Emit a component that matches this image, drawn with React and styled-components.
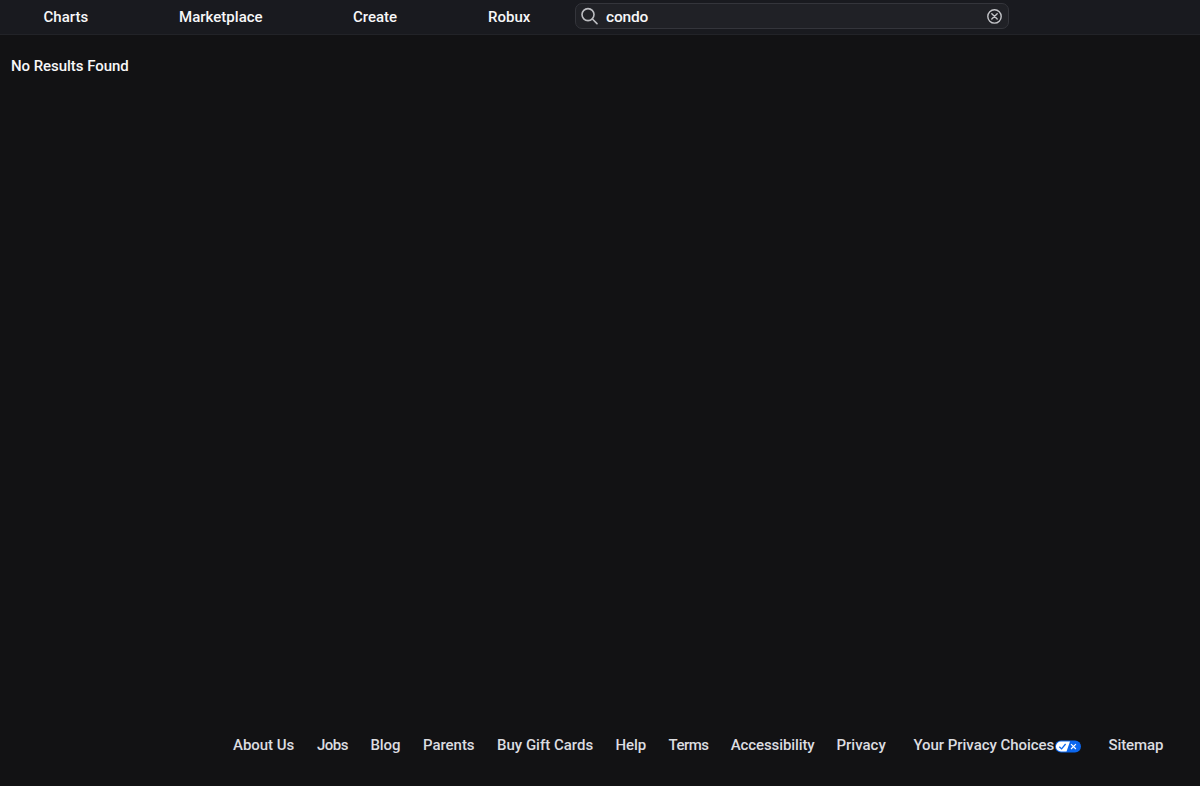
import React from "react";
import styled, { createGlobalStyle } from "styled-components";

const GlobalStyle = createGlobalStyle`
  * { box-sizing: border-box; }
  body {
    margin: 0;
    background: #121214;
    color: #f7f7f8;
    font-family: Roboto, "Liberation Sans", sans-serif;
    font-size: 15px;
    line-height: 20px;
  }
`;

const Page = styled.div`
  display: flex;
  flex-direction: column;
  height: 786px;
  overflow: hidden;
`;

const Header = styled.header`
  display: flex;
  flex: none;
  height: 35px;
  padding: 3px 0 0 43.5px;
  background: #191a1f;
  border-bottom: 1px solid #222328;
`;

const Nav = styled.nav`
  display: flex;
  gap: 91px;
  width: 531.5px;
  padding-top: 4px;
`;

const NavLink = styled.a`
  width: ${(p) => p.$width}px;
  font-weight: 550;
  letter-spacing: ${(p) => p.$track || 0}px;
  white-space: nowrap;
`;

const SearchBox = styled.div`
  display: flex;
  align-items: center;
  width: 434px;
  height: 26px;
  padding: 0 5px;
  background: #202126;
  border: 1px solid #34353b;
  border-radius: 7px;
`;

const Query = styled.span`
  flex: 1;
  padding: 1px 0 0 7px;
  font-size: 15.5px;
  font-weight: 500;
  letter-spacing: -0.2px;
`;

const Content = styled.main`
  flex: 1;
  padding: 21px 11px;
`;

const Message = styled.p`
  margin: 0;
  font-weight: 550;
  letter-spacing: -0.05px;
`;

const Footer = styled.footer`
  display: flex;
  flex: none;
  height: 51px;
  padding-left: 233px;
  color: #dcdde0;
`;

const FooterLink = styled.a`
  display: flex;
  flex: none;
  align-items: center;
  width: ${(p) => p.$width}px;
  height: 20px;
  font-weight: 500;
  letter-spacing: ${(p) => p.$track || 0}px;
  white-space: nowrap;
`;

const navItems = [
  ["Charts", 44.5, 0],
  ["Marketplace", 83, 0.02],
  ["Create", 44, 0],
  ["Robux", 43, 0],
];

const footerItems = [
  ["About Us", 84, -0.05],
  ["Jobs", 53.5, -0.5],
  ["Blog", 52.5, -0.1],
  ["Parents", 74, -0.05],
  ["Buy Gift Cards", 118.5, 0],
  ["Help", 53, -0.1],
  ["Terms", 62.2, -0.5],
  ["Accessibility", 105.8, -0.1],
  ["Privacy", 77, 0],
  ["Your Privacy Choices", 142, -0.05],
];

const SearchIcon = () => (
  <svg width="18" height="18" viewBox="0 0 18 18" fill="none" stroke="#bcbdc1" strokeWidth="1.6" strokeLinecap="round">
    <circle cx="7" cy="7.6" r="6" />
    <path d="m11.4 12 4.6 4.6" />
  </svg>
);

const ClearIcon = () => (
  <svg width="16" height="16" viewBox="1 0 16 16" fill="none" stroke="#c3c4c8" strokeWidth="1.4" strokeLinecap="round">
    <circle cx="8.5" cy="8.4" r="6.7" />
    <path d="m5.8 5.7 5.4 5.4m0-5.4-5.4 5.4" />
  </svg>
);

const ChoicesSlot = styled.span`
  display: flex;
  flex: none;
  width: 53px;
  padding-top: 5px;
`;

const ChoicesIcon = () => (
  <svg width="27" height="13" viewBox="0.5 0 27 13">
    <rect x="0.5" y="0.5" width="26" height="12" rx="6" fill="#0b66ee" />
    <path d="M6.5 1.4h9L12 11.6H6.5a5.1 5.1 0 0 1 0-10.2Z" fill="#fff" />
    <path d="m4.8 6.7 2.3 2.2 4-4.9" fill="none" stroke="#0b66ee" strokeWidth="1.3" />
    <path d="m16.5 4.1 4.9 4.9m0-4.9-4.9 4.9" fill="none" stroke="#fff" strokeWidth="1.2" />
  </svg>
);

export default function App() {
  return (
    <Page>
      <GlobalStyle />
      <Header>
        <Nav>
          {navItems.map(([label, width, track]) => (
            <NavLink key={label} $width={width} $track={track}>{label}</NavLink>
          ))}
        </Nav>
        <SearchBox>
          <SearchIcon />
          <Query>condo</Query>
          <ClearIcon />
        </SearchBox>
      </Header>
      <Content>
        <Message>No Results Found</Message>
      </Content>
      <Footer>
        {footerItems.map(([label, width, track]) => (
          <FooterLink key={label} $width={width} $track={track}>{label}</FooterLink>
        ))}
        <ChoicesSlot><ChoicesIcon /></ChoicesSlot>
        <FooterLink $width={56} $track={-0.1}>Sitemap</FooterLink>
      </Footer>
    </Page>
  );
}
